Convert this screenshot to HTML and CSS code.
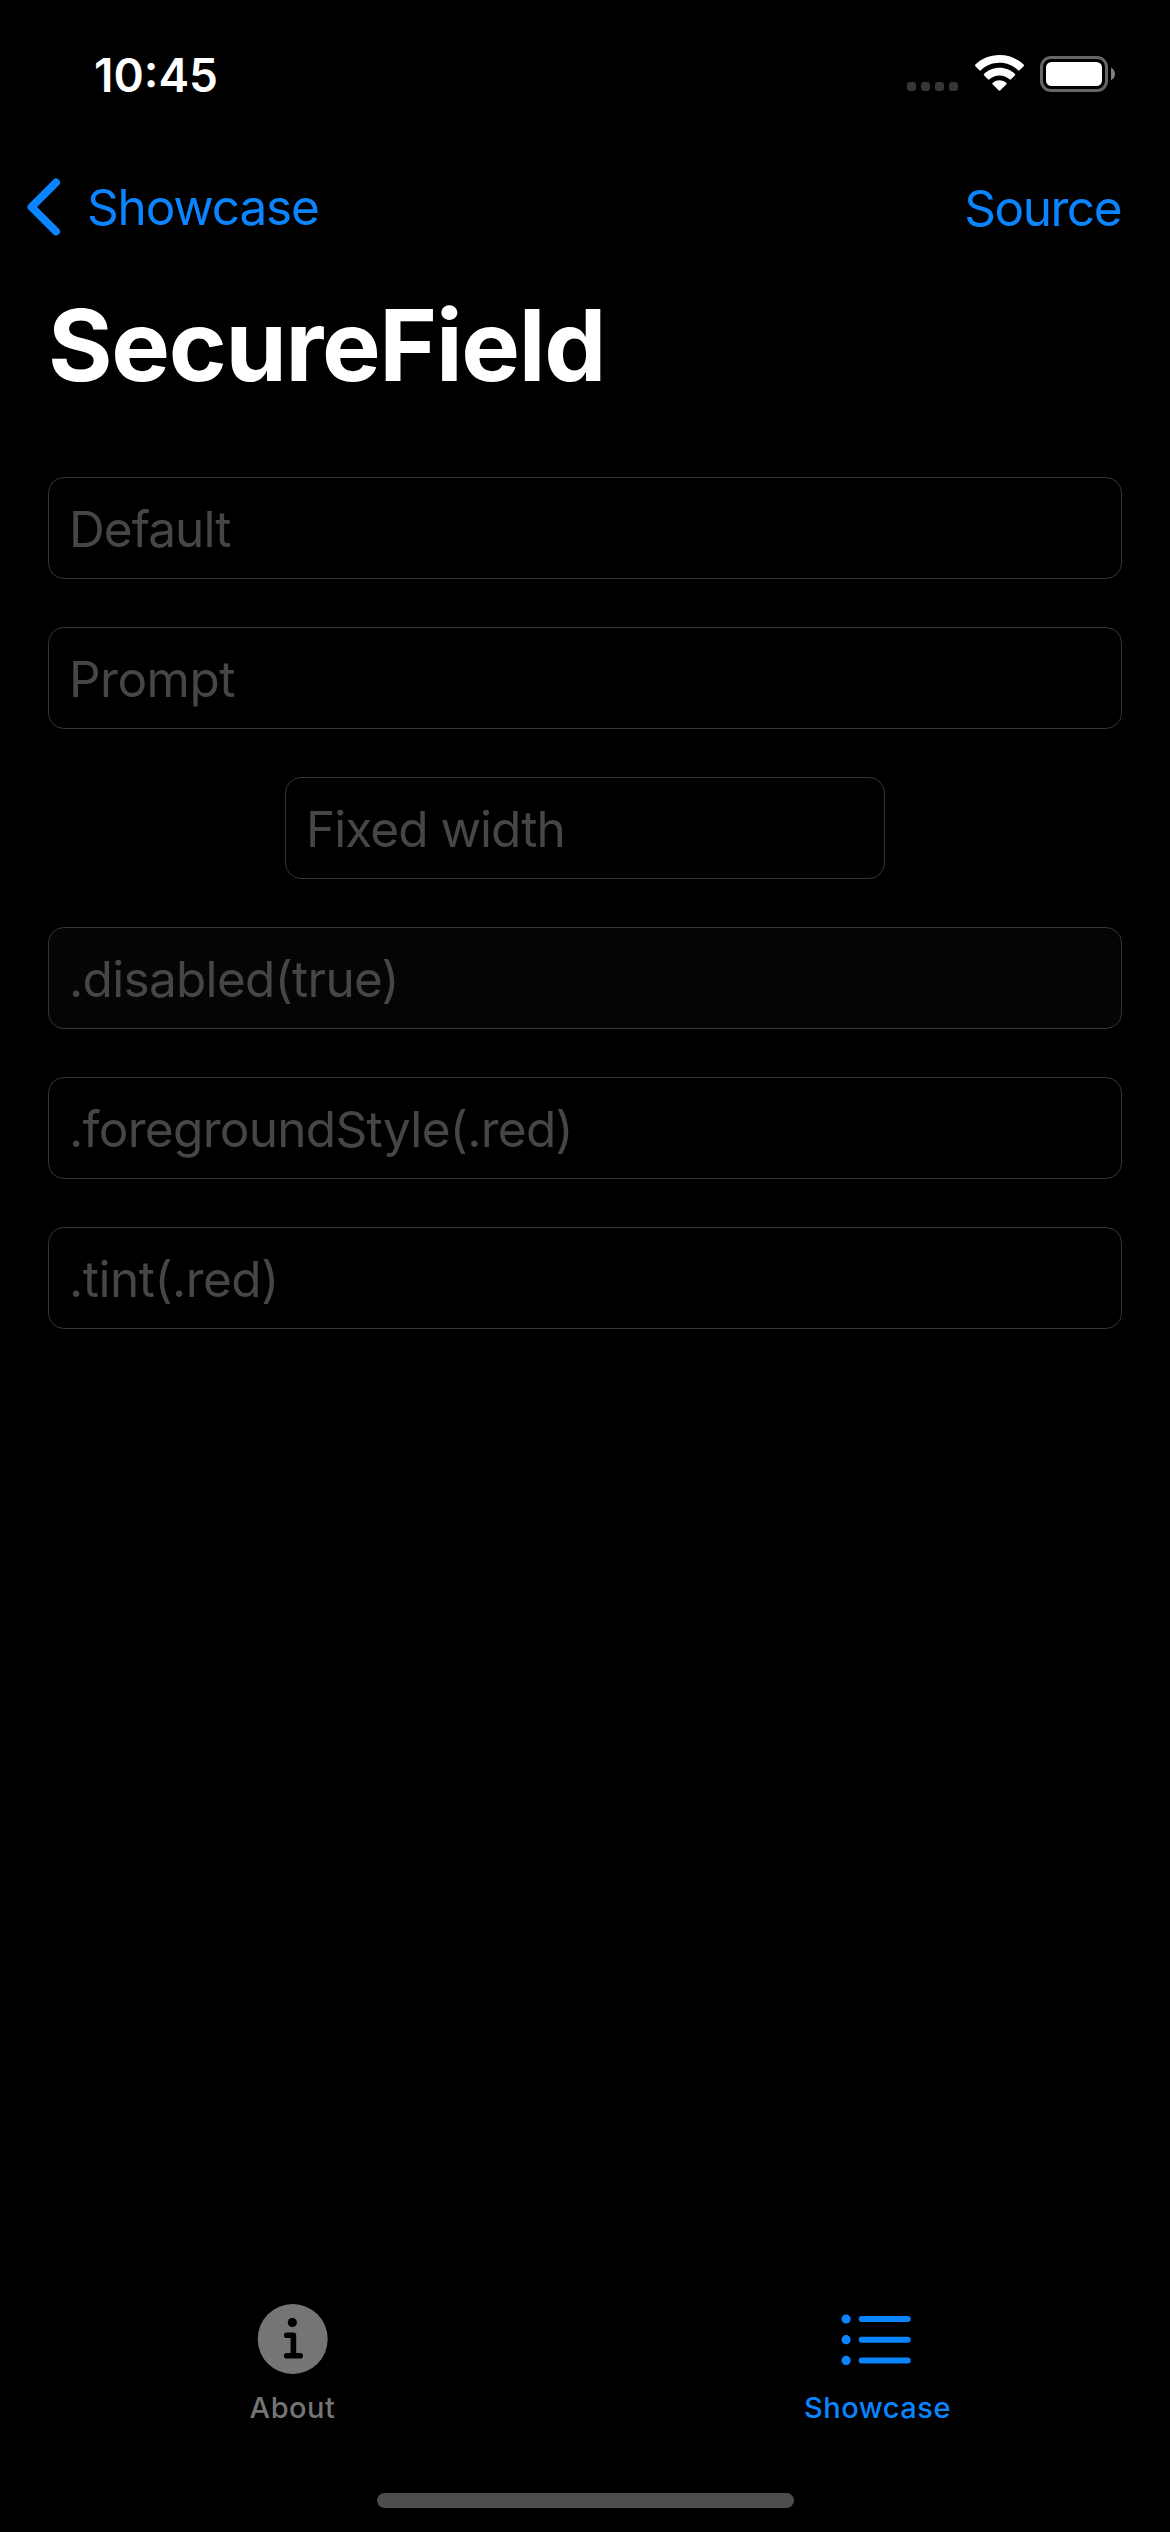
FILE: index.html
```html
<!DOCTYPE html>
<html lang="en">
<head>
<meta charset="utf-8">
<title>SecureField</title>
<link rel="stylesheet" href="styles.css">
</head>
<body>
<div class="screen">
  <header class="status">
    <span class="clock">10:45</span>
    <div class="indicators">
      <div class="cellular"><i></i><i></i><i></i><i></i></div>
      <svg class="wifi" width="49" height="37" viewBox="0 0 49 37" fill="#fff">
        <path d="M24.5 0C34 0 42.700 3.700 48.600 9.600Q49.300 10.400 48.600 11.200L44.600 15.200Q43.900 15.900 43.100 15.200C38.200 10.500 31.700 7.800 24.500 7.800S10.800 10.500 5.900 15.200Q5.100 15.900 4.400 15.200L.4 11.200Q-.3 10.400 .4 9.600C6.300 3.700 15 0 24.500 0Z"/>
        <path d="M24.500 12.700C30.600 12.700 36 15.100 40 18.900Q40.700 19.600 40 20.300L36 24.300Q35.300 25 34.500 24.300C31.900 21.900 28.400 20.400 24.500 20.400S17.100 21.900 14.500 24.300Q13.700 25 13 24.300L9 20.300Q8.300 19.600 9 18.900C13 15.100 18.400 12.700 24.500 12.700Z"/>
        <path d="M24.500 25.200C27.100 25.200 29.500 26.100 31.300 27.700Q32.100 28.400 31.400 29.200L25.200 35.500Q24.500 36.200 23.800 35.500L17.600 29.200Q16.900 28.400 17.700 27.700C19.500 26.100 21.900 25.200 24.500 25.200Z"/>
      </svg>
      <svg class="battery" width="75" height="36" viewBox="0 0 75 36">
        <rect x="1.500" y="1.500" width="65" height="33" rx="9.500" fill="none" stroke="#666" stroke-width="3"/>
        <rect x="6" y="6" width="56" height="24" rx="5.500" fill="#fff"/>
        <path d="M71 11.800C73.500 13 75 15.300 75 18S73.500 23 71 24.200Z" fill="#808080"/>
      </svg>
    </div>
  </header>
  <nav class="navbar">
    <a class="back">
      <svg width="34" height="58" viewBox="0 0 34 58" fill="none" stroke="#0a84ff" stroke-width="8" stroke-linecap="round" stroke-linejoin="round"><path d="M29 4.500L4.500 29L29 53.500"/></svg>
      <span class="back-label">Showcase</span>
    </a>
    <a class="source">Source</a>
  </nav>
  <h1 class="title">SecureField</h1>
  <main class="fields">
    <div class="field snug">Default</div>
    <div class="field loose">Prompt</div>
    <div class="field fixed snug">Fixed width</div>
    <div class="field disabled">.disabled(true)</div>
    <div class="field">.foregroundStyle(.red)</div>
    <div class="field loose">.tint(.red)</div>
  </main>
  <footer class="tabs">
    <a class="tab">
      <svg width="70" height="70" viewBox="0 0 70 70"><circle cx="34.700" cy="35" r="35" fill="#757575"/><circle cx="34.300" cy="18.500" r="4.600"/><path d="M28.700 31.300H35.400V51.800M28.700 51.800H42.200" fill="none" stroke="#000" stroke-width="5.600" stroke-linecap="round" stroke-linejoin="round"/></svg>
      <span>About</span>
    </a>
    <a class="tab active">
      <svg width="70" height="70" viewBox="0 0 70 70" fill="#0a84ff"><circle cx="3.100" cy="15" r="4.600"/><circle cx="3.100" cy="35.700" r="4.600"/><circle cx="3.100" cy="56.400" r="4.600"/><rect x="15.700" y="12" width="52" height="6" rx="3"/><rect x="15.700" y="32.700" width="52" height="6" rx="3"/><rect x="15.700" y="53.400" width="52" height="6" rx="3"/></svg>
      <span>Showcase</span>
    </a>
  </footer>
  <div class="home"></div>
</div>
</body>
</html>
```
FILE: styles.css
```css
* { box-sizing: border-box; }
body { margin: 0; background: #000; }
.screen {
  width: 1170px;
  height: 2532px;
  background: #000;
  color: #fff;
  font-family: Inter, "Liberation Sans", sans-serif;
  display: flex;
  flex-direction: column;
  white-space: nowrap;
}
svg { display: block; overflow: visible; flex: none; }
.status {
  height: 141px;
  padding: 0 55px 0 94px;
  display: flex;
  justify-content: space-between;
}
.clock { font-size: 46px; font-weight: 600; line-height: 56px; padding-top: 47px; }
.indicators { display: flex; padding-top: 55px; }
.cellular { display: flex; gap: 5px; padding-top: 27px; margin-right: 17px; }
.cellular i { width: 9px; height: 9px; border-radius: 3px; background: #363636; }
.wifi { margin-right: 16px; }
.battery { margin-top: 1px; }
.navbar {
  height: 132px;
  padding: 0 48px 0 27px;
  display: flex;
  justify-content: space-between;
  align-items: center;
  color: #0a84ff;
  font-size: 49.5px;
}
.back { display: flex; align-items: center; gap: 26px; }
.back-label { letter-spacing: -1.15px; }
.source { letter-spacing: -1.5px; padding: 2px 1px 0 0; }
.title { margin: 0; height: 156px; padding: 12px 0 0 48px; font-size: 98.6px; line-height: 120px; font-weight: 700; letter-spacing: -1.3px; }
.fields { flex: 1; padding: 48px 48px 0; display: flex; flex-direction: column; gap: 48px; }
.field {
  height: 102px;
  border: 1px solid #343436;
  border-radius: 16px;
  padding: 2px 0 0 20px;
  display: flex;
  align-items: center;
  font-size: 49.5px;
  line-height: 60px;
  letter-spacing: -0.7px;
  color: #464648;
}
.snug { letter-spacing: -0.95px; }
.loose { letter-spacing: -0.5px; }
.fixed { width: 600px; align-self: center; }
.disabled { background: #050505; }
.tabs { height: 189px; display: flex; }
.tab { flex: 1; display: flex; flex-direction: column; align-items: center; color: #757575; font-size: 29px; font-weight: 500; line-height: 36px; letter-spacing: 0.5px; gap: 16px; }
.tab.active { color: #0a84ff; }
.home { width: 417px; height: 15px; border-radius: 8px; background: #4d4d4d; align-self: center; margin-bottom: 24px; }
```
